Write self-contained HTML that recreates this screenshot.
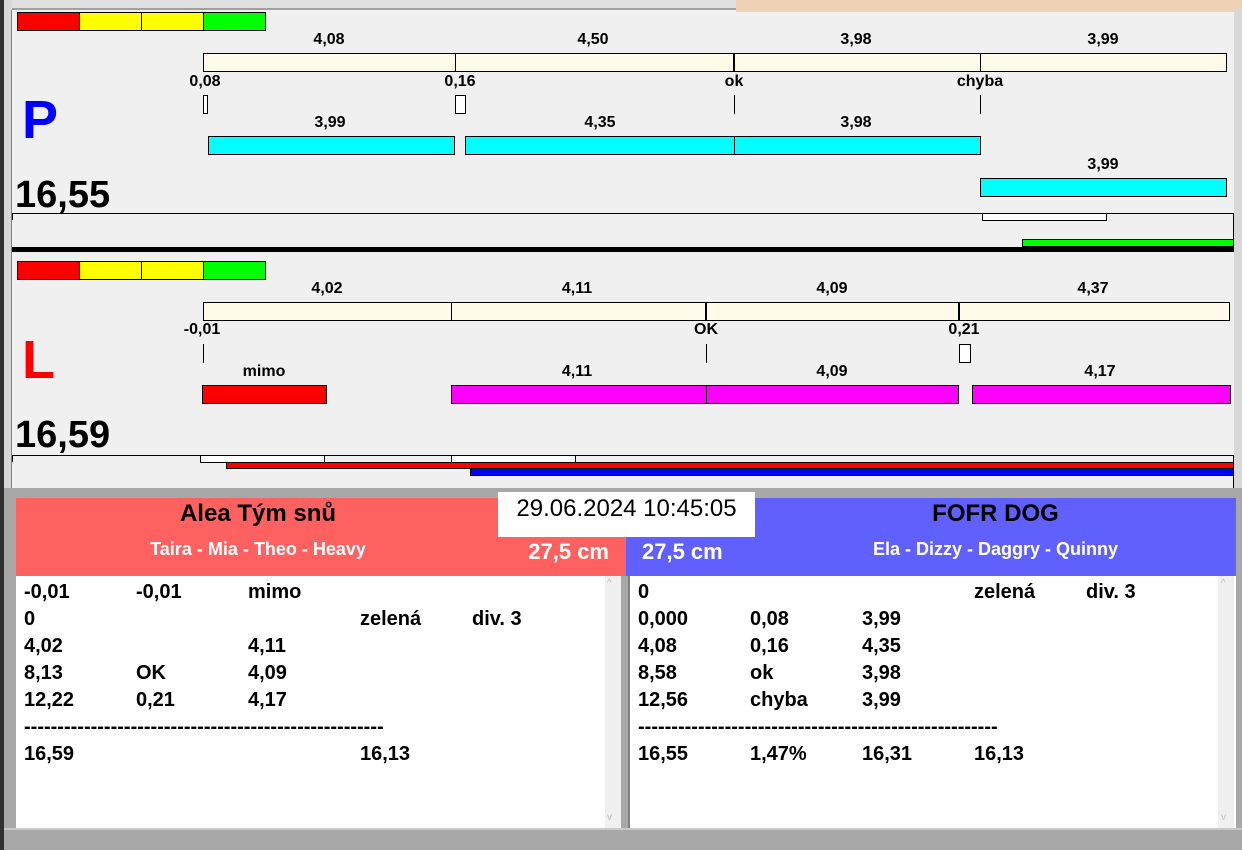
<!DOCTYPE html>
<html><head><meta charset="utf-8"><style>
*{margin:0;padding:0;box-sizing:border-box}
body{width:1242px;height:850px;position:relative;overflow:hidden;background:#f0f0f0;font-family:"Liberation Sans",Arial,sans-serif;font-weight:bold}
.a{position:absolute}
.t{position:absolute;font-size:16px;color:#000;transform:translateX(-50%);white-space:nowrap;line-height:16px}
.bx{position:absolute;border:1px solid #000}
.by{background:#fffbe8}
.cy{background:#00ffff}
.mg{background:#ff00ff}
.vl{position:absolute;width:1px;background:#000}
.row{position:absolute;font-size:20px;line-height:20px;white-space:nowrap}
</style></head><body>
<!-- top tabs strip -->
<div class="a" style="left:0;top:0;width:1242px;height:10px;background:#e0e0e0"></div>
<div class="a" style="left:736px;top:0;width:506px;height:12px;background:#efd1b6"></div>
<div class="a" style="left:12px;top:8px;width:724px;height:2px;background:#a0a0a0"></div>
<div class="a" style="left:0;top:0;width:4px;height:850px;background:#303030"></div>
<div class="a" style="left:4px;top:0;width:8px;height:850px;background:#d8d8d8"></div>
<div class="a" style="left:11px;top:10px;width:1px;height:480px;background:#808080"></div>
<div class="a" style="left:1234px;top:10px;width:8px;height:480px;background:#d8d8d8"></div>

<!-- P panel -->
<div class="bx" style="left:17px;top:12px;width:63px;height:19px;background:#ff0000"></div>
<div class="bx" style="left:79px;top:12px;width:63px;height:19px;background:#ffff00"></div>
<div class="bx" style="left:141px;top:12px;width:63px;height:19px;background:#ffff00"></div>
<div class="bx" style="left:203px;top:12px;width:63px;height:19px;background:#00ff00"></div>
<div class="t" style="left:329px;top:32px">4,08</div>
<div class="t" style="left:593px;top:32px">4,50</div>
<div class="t" style="left:856px;top:32px">3,98</div>
<div class="t" style="left:1103px;top:32px">3,99</div>
<div class="bx by" style="left:203px;top:53px;width:1024px;height:19px"></div>
<div class="vl" style="left:455px;top:53px;height:19px"></div>
<div class="vl" style="left:733px;top:53px;width:2px;height:19px"></div>
<div class="vl" style="left:980px;top:53px;height:19px"></div>
<div class="t" style="left:205px;top:74px">0,08</div>
<div class="t" style="left:460px;top:74px">0,16</div>
<div class="t" style="left:734px;top:74px">ok</div>
<div class="t" style="left:980px;top:74px">chyba</div>
<div class="bx" style="left:203px;top:95px;width:5px;height:19px;background:#fff"></div>
<div class="bx" style="left:455px;top:95px;width:11px;height:19px;background:#fff"></div>
<div class="vl" style="left:734px;top:95px;height:19px"></div>
<div class="vl" style="left:980px;top:95px;height:19px"></div>
<div class="a" style="left:22px;top:90px;font-size:54px;line-height:60px;color:#0000ff">P</div>
<div class="t" style="left:330px;top:115px">3,99</div>
<div class="t" style="left:600px;top:115px">4,35</div>
<div class="t" style="left:856px;top:115px">3,98</div>
<div class="bx cy" style="left:208px;top:136px;width:247px;height:19px"></div>
<div class="bx cy" style="left:465px;top:136px;width:516px;height:19px"></div>
<div class="vl" style="left:734px;top:136px;height:19px"></div>
<div class="t" style="left:1103px;top:157px">3,99</div>
<div class="bx cy" style="left:980px;top:178px;width:247px;height:19px"></div>
<div class="a" style="left:15px;top:174px;font-size:38px;line-height:42px">16,55</div>
<div class="a" style="left:12px;top:213px;width:1222px;height:1px;background:#000"></div>
<div class="a" style="left:1233px;top:213px;width:1px;height:35px;background:#000"></div>
<div class="a" style="left:12px;top:214px;width:1px;height:6px;background:#000"></div>
<div class="bx" style="left:982px;top:213px;width:125px;height:8px;background:#fff"></div>
<div class="bx" style="left:1022px;top:239px;width:212px;height:8px;background:#00ff00"></div>
<div class="a" style="left:12px;top:247px;width:1222px;height:5px;background:#000"></div>

<!-- L panel -->
<div class="bx" style="left:17px;top:261px;width:63px;height:19px;background:#ff0000"></div>
<div class="bx" style="left:79px;top:261px;width:63px;height:19px;background:#ffff00"></div>
<div class="bx" style="left:141px;top:261px;width:63px;height:19px;background:#ffff00"></div>
<div class="bx" style="left:203px;top:261px;width:63px;height:19px;background:#00ff00"></div>
<div class="t" style="left:327px;top:281px">4,02</div>
<div class="t" style="left:577px;top:281px">4,11</div>
<div class="t" style="left:832px;top:281px">4,09</div>
<div class="t" style="left:1093px;top:281px">4,37</div>
<div class="bx by" style="left:203px;top:302px;width:1027px;height:19px"></div>
<div class="vl" style="left:451px;top:302px;height:19px"></div>
<div class="vl" style="left:705px;top:302px;width:2px;height:19px"></div>
<div class="vl" style="left:958px;top:302px;width:2px;height:19px"></div>
<div class="t" style="left:202px;top:322px">-0,01</div>
<div class="t" style="left:706px;top:322px">OK</div>
<div class="t" style="left:964px;top:322px">0,21</div>
<div class="vl" style="left:203px;top:344px;height:19px"></div>
<div class="vl" style="left:706px;top:344px;height:19px"></div>
<div class="bx" style="left:959px;top:344px;width:12px;height:19px;background:#fff"></div>
<div class="a" style="left:22px;top:330px;font-size:54px;line-height:60px;color:#ff0000">L</div>
<div class="t" style="left:264px;top:364px">mimo</div>
<div class="t" style="left:577px;top:364px">4,11</div>
<div class="t" style="left:832px;top:364px">4,09</div>
<div class="t" style="left:1100px;top:364px">4,17</div>
<div class="bx" style="left:202px;top:385px;width:125px;height:19px;background:#ff0000"></div>
<div class="bx mg" style="left:451px;top:385px;width:508px;height:19px"></div>
<div class="vl" style="left:706px;top:385px;height:19px"></div>
<div class="bx mg" style="left:972px;top:385px;width:259px;height:19px"></div>
<div class="a" style="left:15px;top:414px;font-size:38px;line-height:42px">16,59</div>
<div class="a" style="left:12px;top:455px;width:1222px;height:1px;background:#000"></div>
<div class="a" style="left:1233px;top:455px;width:1px;height:33px;background:#000"></div>
<div class="a" style="left:12px;top:456px;width:1px;height:6px;background:#000"></div>
<div class="bx" style="left:200px;top:455px;width:125px;height:8px;background:#fff"></div>
<div class="bx" style="left:451px;top:455px;width:125px;height:8px;background:#fff"></div>
<div class="bx" style="left:226px;top:462px;width:1008px;height:7px;background:#ff0000"></div>
<div class="bx" style="left:470px;top:468px;width:764px;height:8px;background:#0000ff"></div>

<!-- bottom -->
<div class="a" style="left:4px;top:488px;width:1238px;height:10px;background:#a8a8a8"></div>
<div class="a" style="left:4px;top:498px;width:12px;height:352px;background:#a8a8a8"></div>
<div class="a" style="left:1236px;top:498px;width:6px;height:352px;background:#a8a8a8"></div>
<div class="a" style="left:16px;top:498px;width:610px;height:78px;background:#ff6060"></div>
<div class="a" style="left:626px;top:498px;width:610px;height:78px;background:#6060ff"></div>
<div class="a" style="left:498px;top:492px;width:257px;height:45px;background:#fff;font-weight:normal;font-size:24px;line-height:34px;text-align:center">29.06.2024 10:45:05</div>
<div class="a" style="left:16px;top:500px;width:484px;text-align:center;font-size:24px;line-height:28px">Alea Tým snů</div>
<div class="a" style="left:755px;top:500px;width:481px;text-align:center;font-size:24px;line-height:28px">FOFR DOG</div>
<div class="a" style="left:16px;top:539px;width:484px;text-align:center;font-size:18px;line-height:20px;color:#fff">Taira - Mia - Theo - Heavy</div>
<div class="a" style="left:755px;top:539px;width:481px;text-align:center;font-size:18px;line-height:20px;color:#fff">Ela - Dizzy - Daggry - Quinny</div>
<div class="a" style="left:500px;top:540px;width:109px;text-align:right;font-size:22px;line-height:24px;color:#fff">27,5 cm</div>
<div class="a" style="left:642px;top:540px;font-size:22px;line-height:24px;color:#fff">27,5 cm</div>

<div class="a" style="left:16px;top:576px;width:605px;height:252px;background:#fff;border-right:1px solid #ccc"></div>
<div class="a" style="left:605px;top:576px;width:16px;height:252px;background:#f0f0f0"></div>
<div class="a" style="left:621px;top:576px;width:8px;height:252px;background:#a8a8a8"></div>
<div class="a" style="left:628px;top:576px;width:2px;height:252px;background:#808080"></div>
<div class="a" style="left:630px;top:576px;width:606px;height:252px;background:#fff"></div>
<div class="a" style="left:1218px;top:576px;width:16px;height:252px;background:#f0f0f0"></div>
<div class="a" style="left:4px;top:828px;width:1238px;height:22px;background:#a8a8a8;border-top:2px solid #c8c8c8"></div>
<div class="a" style="left:607px;top:578px;font-size:10px;color:#bbb;font-weight:normal">^</div>
<div class="a" style="left:607px;top:812px;font-size:10px;color:#bbb;font-weight:normal">v</div>
<div class="a" style="left:1221px;top:578px;font-size:10px;color:#bbb;font-weight:normal">^</div>
<div class="a" style="left:1221px;top:812px;font-size:10px;color:#bbb;font-weight:normal">v</div>

<div class="row" style="left:24px;top:582px">-0,01</div><div class="row" style="left:136px;top:582px">-0,01</div><div class="row" style="left:248px;top:582px">mimo</div>
<div class="row" style="left:24px;top:609px">0</div><div class="row" style="left:360px;top:609px">zelená</div><div class="row" style="left:472px;top:609px">div. 3</div>
<div class="row" style="left:24px;top:636px">4,02</div><div class="row" style="left:248px;top:636px">4,11</div>
<div class="row" style="left:24px;top:663px">8,13</div><div class="row" style="left:136px;top:663px">OK</div><div class="row" style="left:248px;top:663px">4,09</div>
<div class="row" style="left:24px;top:690px">12,22</div><div class="row" style="left:136px;top:690px">0,21</div><div class="row" style="left:248px;top:690px">4,17</div>
<div class="row" style="left:24px;top:717px">------------------------------------------------------</div>
<div class="row" style="left:24px;top:744px">16,59</div><div class="row" style="left:360px;top:744px">16,13</div>

<div class="row" style="left:638px;top:582px">0</div><div class="row" style="left:974px;top:582px">zelená</div><div class="row" style="left:1086px;top:582px">div. 3</div>
<div class="row" style="left:638px;top:609px">0,000</div><div class="row" style="left:750px;top:609px">0,08</div><div class="row" style="left:862px;top:609px">3,99</div>
<div class="row" style="left:638px;top:636px">4,08</div><div class="row" style="left:750px;top:636px">0,16</div><div class="row" style="left:862px;top:636px">4,35</div>
<div class="row" style="left:638px;top:663px">8,58</div><div class="row" style="left:750px;top:663px">ok</div><div class="row" style="left:862px;top:663px">3,98</div>
<div class="row" style="left:638px;top:690px">12,56</div><div class="row" style="left:750px;top:690px">chyba</div><div class="row" style="left:862px;top:690px">3,99</div>
<div class="row" style="left:638px;top:717px">------------------------------------------------------</div>
<div class="row" style="left:638px;top:744px">16,55</div><div class="row" style="left:750px;top:744px">1,47%</div><div class="row" style="left:862px;top:744px">16,31</div><div class="row" style="left:974px;top:744px">16,13</div>
</body></html>
